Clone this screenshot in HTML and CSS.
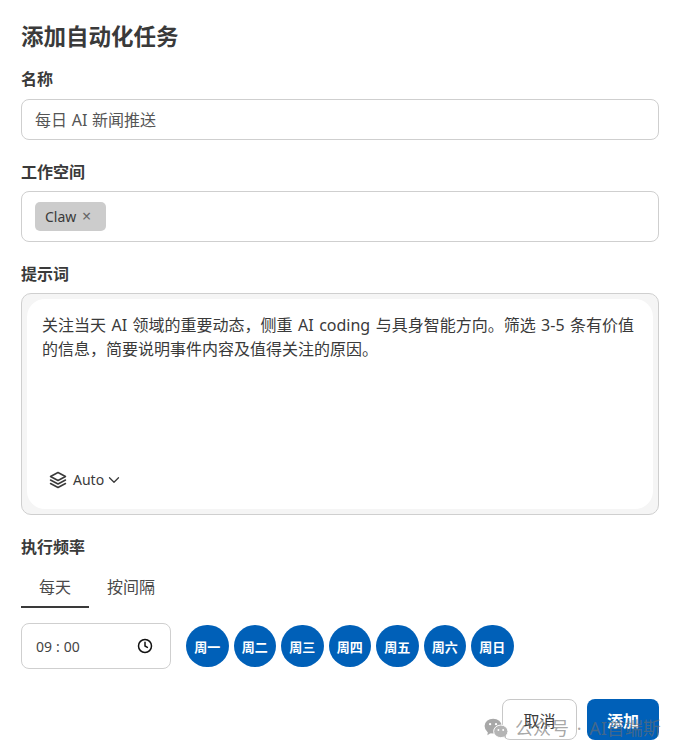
FILE: index.html
```html
<!DOCTYPE html>
<html lang="zh-CN">
<head>
    <meta charset="UTF-8">
    <meta name="viewport" content="width=device-width, initial-scale=1.0">
    <title>添加自动化任务</title>
    <link rel="stylesheet" href="styles.css">
</head>
<body class="body">
    <form class="form" onsubmit="return false;">
        <h1 class="form__title">添加自动化任务</h1>

        <section class="field field_name">
            <h2 class="field__label">名称</h2>
            <div class="box box_name">每日 AI 新闻推送</div>
        </section>

        <section class="field field_space">
            <h2 class="field__label">工作空间</h2>
            <div class="box box_space">
                <span class="chip">Claw <span class="chip__close">×</span></span>
            </div>
        </section>

        <section class="field field_prompt">
            <h2 class="field__label">提示词</h2>
            <div class="prompt">
                <div class="prompt__inner">
                    <p class="prompt__text">关注当天 AI 领域的重要动态，侧重 AI coding 与具身智能方向。筛选 3-5 条有价值的信息，简要说明事件内容及值得关注的原因。</p>
                    <div class="model">
                        <svg class="model__icon" viewBox="0 0 18 18" fill="none" stroke="currentColor" stroke-width="1.5" stroke-linejoin="round" stroke-linecap="round">
                            <path d="M9 1.5 16.5 5.5 9 9.5 1.5 5.5Z"/>
                            <path d="M1.5 9 9 13 16.5 9"/>
                            <path d="M1.5 12.5 9 16.5 16.5 12.5"/>
                        </svg>
                        <span>Auto</span>
                        <svg class="model__arrow" viewBox="0 0 12 12" fill="none" stroke="currentColor" stroke-width="1.3" stroke-linecap="round" stroke-linejoin="round">
                            <path d="M1.5 3.8 6 8.3 10.5 3.8"/>
                        </svg>
                    </div>
                </div>
            </div>
        </section>

        <section class="field field_freq">
            <h2 class="field__label">执行频率</h2>
            <div class="tabs">
                <span class="tabs__item tabs__item_active">每天</span>
                <span class="tabs__item">按间隔</span>
            </div>
            <div class="schedule">
                <div class="time">
                    <span class="time__value">09<span class="time__sep">:</span>00</span>
                    <svg class="time__icon" viewBox="0 0 16 16" fill="none" stroke="#111" stroke-width="1.5" stroke-linecap="round" stroke-linejoin="round">
                        <circle cx="8" cy="8" r="6.5"/>
                        <path d="M8 4.2V8L10.4 9.4"/>
                    </svg>
                </div>
                <div class="days">
                    <span class="days__item">周一</span>
                    <span class="days__item">周二</span>
                    <span class="days__item">周三</span>
                    <span class="days__item">周四</span>
                    <span class="days__item">周五</span>
                    <span class="days__item">周六</span>
                    <span class="days__item">周日</span>
                </div>
            </div>
        </section>

        <div class="actions">
            <button class="actions__btn actions__btn_cancel">取消</button>
            <button class="actions__btn actions__btn_add">添加</button>
        </div>
    </form>

    <div class="watermark">
        <svg class="watermark__icon" viewBox="0 0 26 22">
            <ellipse cx="9.5" cy="8.5" rx="9" ry="7.8" fill="#a8a8a8"/>
            <path d="M4 13.5 3.5 18 8 15Z" fill="#a8a8a8"/>
            <ellipse cx="17.5" cy="14" rx="7.5" ry="6.6" fill="#b4b4b4" stroke="#fff" stroke-width="1"/>
            <path d="M21 19 23 21.5 22.6 17.5Z" fill="#b4b4b4"/>
            <circle cx="6.3" cy="6.5" r="1.2" fill="#fff"/>
            <circle cx="12.5" cy="6.5" r="1.2" fill="#fff"/>
            <circle cx="15" cy="12.6" r="1" fill="#fff"/>
            <circle cx="20" cy="12.6" r="1" fill="#fff"/>
        </svg>
        <span>公众号 · AI首端斯</span>
    </div>
</body>
</html>
```

FILE: styles.css
```css
* {
    margin: 0;
    padding: 0;
    box-sizing: border-box;
}

.body {
    position: relative;
    height: 754px;
    overflow: hidden;
    background: #fff;
    color: #3a3a3a;
    font-family: "Noto Sans", "Noto Sans CJK SC", sans-serif;
    font-size: 16px;
}

.form {
    padding: 22px 25px 0 21px;
}

.form__title {
    font-size: 22.5px;
    line-height: 30px;
    font-weight: 700;
}

.field__label {
    font-size: 16px;
    line-height: 24px;
    font-weight: 600;
}

.field_name {
    margin-top: 15px;
}

.field_space {
    margin-top: 20px;
}

.field_prompt {
    margin-top: 20px;
}

.field_freq {
    margin-top: 20px;
}

.box {
    border: 1px solid #cfcfcf;
    border-radius: 8px;
    background: #fff;
}

.box_name {
    height: 41px;
    margin-top: 8px;
    padding-left: 13px;
    font-size: 16px;
    line-height: 41px;
    word-spacing: 0.5px;
    color: #555;
}

.box_space {
    height: 51px;
    margin-top: 7px;
    padding: 10px 13px;
}

.chip {
    display: inline-block;
    height: 29px;
    width: 71px;
    padding-left: 10px;
    border-radius: 5px;
    background: #ccc;
    font-size: 14px;
    line-height: 29px;
}

.chip__close {
    margin-left: 2px;
    color: #666;
    font-size: 16px;
}

.prompt {
    margin-top: 7px;
    height: 222px;
    padding: 5px;
    border: 1px solid #cfcfcf;
    border-radius: 10px;
    background: #f5f5f5;
}

.prompt__inner {
    display: flex;
    flex-direction: column;
    justify-content: space-between;
    height: 100%;
    padding: 14px 15px 19px;
    border-radius: 18px;
    background: #fff;
}

.prompt__text {
    font-size: 16px;
    line-height: 24px;
    word-spacing: 1.3px;
}

.model {
    display: flex;
    align-items: center;
    gap: 6px;
    padding-left: 7px;
    font-size: 14px;
    line-height: 20px;
    color: #3a3a3a;
}

.model__icon {
    width: 18px;
    height: 18px;
}

.model__arrow {
    width: 12px;
    height: 12px;
    margin-left: -2px;
}

.tabs {
    display: flex;
    margin-top: 3px;
    height: 46px;
}

.tabs__item {
    width: 68px;
    padding-top: 14px;
    text-align: center;
    font-size: 16px;
    line-height: 22px;
    color: #4a4a4a;
}

.tabs__item_active {
    border-bottom: 2px solid #3a3a3a;
}

.tabs__item + .tabs__item {
    width: 84px;
}

.schedule {
    display: flex;
    align-items: center;
    gap: 15px;
    margin-top: 15px;
}

.time {
    display: flex;
    align-items: center;
    justify-content: space-between;
    width: 150px;
    height: 46px;
    padding: 0 17px 0 14px;
    border: 1px solid #cfcfcf;
    border-radius: 8px;
}

.time__value {
    font-size: 14px;
    color: #444;
}

.time__sep {
    margin: 0 4px;
}

.time__icon {
    width: 16px;
    height: 16px;
}

.days {
    display: flex;
    gap: 4.75px;
}

.days__item {
    display: flex;
    align-items: center;
    justify-content: center;
    width: 42.75px;
    height: 42.75px;
    border-radius: 50%;
    background: #0060b8;
    color: #fff;
    font-size: 13px;
    font-weight: 700;
}

.actions {
    display: flex;
    justify-content: flex-end;
    gap: 10px;
    margin-top: 30px;
}

.actions__btn {
    height: 41px;
    border-radius: 8px;
    font-family: inherit;
    font-size: 16px;
}

.actions__btn_cancel {
    width: 75px;
    border: 1px solid #c8c8c8;
    background: #fff;
    color: #3a3a3a;
}

.actions__btn_add {
    width: 72px;
    border: 0;
    background: #0060b8;
    color: #fff;
    font-weight: 600;
}

.watermark {
    position: absolute;
    left: 484px;
    top: 716px;
    display: flex;
    align-items: center;
    gap: 6px;
    color: rgba(110, 110, 110, 0.62);
    font-size: 18px;
    line-height: 24px;
    word-spacing: 3px;
    white-space: nowrap;
}

.watermark__icon {
    width: 25px;
    height: 21px;
}
```
